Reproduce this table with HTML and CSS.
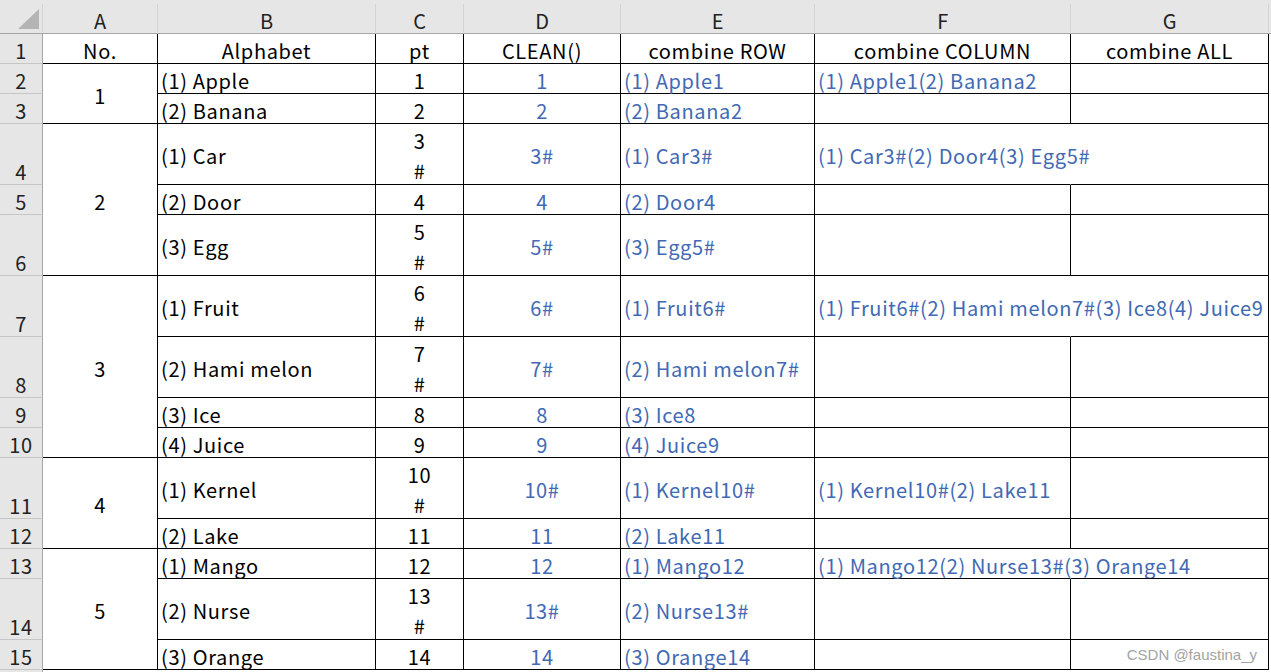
FILE: index.html
```html
<!DOCTYPE html>
<html>
<head>
<meta charset="utf-8">
<link rel="stylesheet" href="styles.css">
</head>
<body>
<div class="sheet">
  <div class="corner"><svg width="43" height="33" viewBox="0 0 43 33"><polygon points="18,29 39,29 39,9" fill="#b4b4b4"/></svg></div>
  <div class="ch">A</div><div class="ch">B</div><div class="ch">C</div><div class="ch">D</div><div class="ch">E</div><div class="ch">F</div><div class="ch">G</div>

  <div class="rh">1</div>
  <div class="c ctr">No.</div><div class="c ctr">Alphabet</div><div class="c ctr">pt</div><div class="c ctr">CLEAN()</div><div class="c ctr">combine ROW</div><div class="c ctr">combine COLUMN</div><div class="c ctr">combine ALL</div>

  <div class="rh">2</div>
  <div class="c ctr span2">1</div><div class="c">(1) Apple</div><div class="c ctr">1</div><div class="c ctr blue">1</div><div class="c blue">(1) Apple1</div><div class="c blue">(1) Apple1(2) Banana2</div><div class="c"></div>

  <div class="rh">3</div>
  <div class="c">(2) Banana</div><div class="c ctr">2</div><div class="c ctr blue">2</div><div class="c blue">(2) Banana2</div><div class="c"></div><div class="c"></div>

  <div class="rh">4</div>
  <div class="c ctr span3">2</div><div class="c">(1) Car</div><div class="c ctr wrap">3<br>#</div><div class="c ctr blue">3#</div><div class="c blue">(1) Car3#</div><div class="c blue nr">(1) Car3#(2) Door4(3) Egg5#</div><div class="c"></div>

  <div class="rh">5</div>
  <div class="c">(2) Door</div><div class="c ctr">4</div><div class="c ctr blue">4</div><div class="c blue">(2) Door4</div><div class="c"></div><div class="c"></div>

  <div class="rh">6</div>
  <div class="c">(3) Egg</div><div class="c ctr wrap">5<br>#</div><div class="c ctr blue">5#</div><div class="c blue">(3) Egg5#</div><div class="c"></div><div class="c"></div>

  <div class="rh">7</div>
  <div class="c ctr span4">3</div><div class="c">(1) Fruit</div><div class="c ctr wrap">6<br>#</div><div class="c ctr blue">6#</div><div class="c blue">(1) Fruit6#</div><div class="c blue nr">(1) Fruit6#(2) Hami melon7#(3) Ice8(4) Juice9</div><div class="c"></div>

  <div class="rh">8</div>
  <div class="c">(2) Hami melon</div><div class="c ctr wrap">7<br>#</div><div class="c ctr blue">7#</div><div class="c blue">(2) Hami melon7#</div><div class="c"></div><div class="c"></div>

  <div class="rh">9</div>
  <div class="c">(3) Ice</div><div class="c ctr">8</div><div class="c ctr blue">8</div><div class="c blue">(3) Ice8</div><div class="c"></div><div class="c"></div>

  <div class="rh">10</div>
  <div class="c">(4) Juice</div><div class="c ctr">9</div><div class="c ctr blue">9</div><div class="c blue">(4) Juice9</div><div class="c"></div><div class="c"></div>

  <div class="rh">11</div>
  <div class="c ctr span2">4</div><div class="c">(1) Kernel</div><div class="c ctr wrap">10<br>#</div><div class="c ctr blue">10#</div><div class="c blue">(1) Kernel10#</div><div class="c blue">(1) Kernel10#(2) Lake11</div><div class="c"></div>

  <div class="rh">12</div>
  <div class="c">(2) Lake</div><div class="c ctr">11</div><div class="c ctr blue">11</div><div class="c blue">(2) Lake11</div><div class="c"></div><div class="c"></div>

  <div class="rh">13</div>
  <div class="c ctr span3">5</div><div class="c">(1) Mango</div><div class="c ctr">12</div><div class="c ctr blue">12</div><div class="c blue">(1) Mango12</div><div class="c blue nr">(1) Mango12(2) Nurse13#(3) Orange14</div><div class="c"></div>

  <div class="rh">14</div>
  <div class="c">(2) Nurse</div><div class="c ctr wrap">13<br>#</div><div class="c ctr blue">13#</div><div class="c blue">(2) Nurse13#</div><div class="c"></div><div class="c"></div>

  <div class="rh">15</div>
  <div class="c">(3) Orange</div><div class="c ctr">14</div><div class="c ctr blue">14</div><div class="c blue">(3) Orange14</div><div class="c"></div><div class="c wm-host"><span class="watermark">CSDN @faustina_y</span></div>

  <div class="rh last"></div>
</div>
</body>
</html>
```

FILE: styles.css
```css
html, body {
  margin: 0;
  padding: 0;
  background: #ffffff;
  overflow: hidden;
}

.sheet {
  display: grid;
  grid-template-columns: 43px 115px 218px 88px 157px 194px 256px 198px;
  grid-template-rows: 34px 30px 30px 30px 61px 30px 61px 61px 61px 30px 30px 61px 30px 30px 61px 30px 30px;
  width: 1271px;
  height: 672px;
  overflow: hidden;
  background: linear-gradient(to bottom, #e6e6e6 0, #e6e6e6 33px, #a6a6a6 33px, #a6a6a6 34px, transparent 34px);
  font-family: "Noto Sans CJK SC", "Noto Sans", sans-serif;
  font-size: 20px;
  letter-spacing: 0.65px;
  color: #000;
}

.sheet > div {
  box-sizing: border-box;
  min-width: 0;
}

.corner {
  background: #e6e6e6;
  border-bottom: 1px solid #a6a6a6;
  background-image: linear-gradient(#d4d4d4, #d4d4d4);
  background-repeat: no-repeat;
  background-size: 1px 28px;
  background-position: right bottom 1px;
}
.corner svg { display: block; }

.ch {
  background-color: #e6e6e6;
  border-bottom: 1px solid #a6a6a6;
  background-image: linear-gradient(#d4d4d4, #d4d4d4);
  background-repeat: no-repeat;
  background-size: 1px 28px;
  background-position: right bottom 1px;
  display: flex;
  align-items: center;
  justify-content: center;
  color: #222;
  padding-top: 7px;
}

.rh {
  background: #e6e6e6;
  border-right: 1px solid #a6a6a6;
  border-bottom: 1px solid #c6c6c6;
  display: flex;
  align-items: flex-end;
  justify-content: center;
  color: #222;
  line-height: 24px;
  padding-bottom: 0;
}

.c {
  border-right: 1px solid #000;
  border-bottom: 1px solid #000;
  display: flex;
  align-items: center;
  padding: 4px 2px 0 3px;
  white-space: nowrap;
  line-height: 24px;
}

.ctr { justify-content: center; padding-left: 0; padding-right: 0; text-align: center; }
.wrap { line-height: 30px; }
.blue { color: #4169b4; }
.nr { border-right-color: transparent; }

.span2 { grid-row: span 2; }
.span3 { grid-row: span 3; }
.span4 { grid-row: span 4; }

.wm-host { position: relative; }
.watermark {
  position: absolute;
  right: 11px;
  bottom: 5px;
  font-family: "Liberation Sans", Arial, sans-serif;
  font-size: 15px;
  line-height: 18px;
  letter-spacing: 0;
  color: #a3a3a3;
}
```
